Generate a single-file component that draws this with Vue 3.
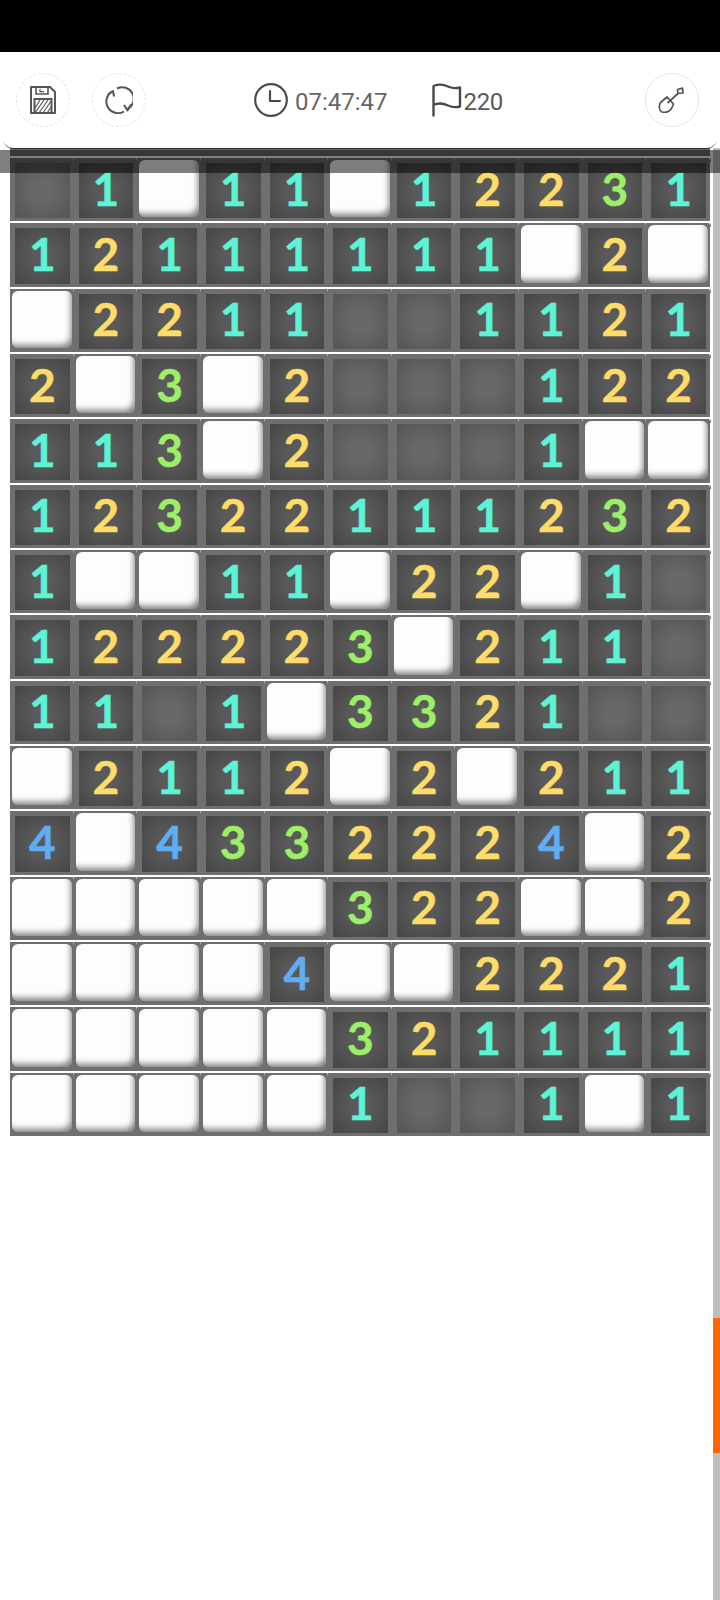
<script setup>
// W = open white tile, . = empty pit, digits = count
const rows = [
  '.1W11W12231',
  '12111111W2W',
  'W2211..1121',
  '2W3W2...122',
  '113W2...1WW',
  '12322111232',
  '1WW11W22W1.',
  '122223W211.',
  '11.1W3321..',
  'W2112W2W211',
  '4W4332224W2',
  'WWWWW322WW2',
  'WWWW4WW2221',
  'WWWWW321111',
  'WWWWW1..1W1'
]
const cells = rows.flatMap((row) => row.split(''))
</script>

<template>
  <div class="page">
    <div class="status-bar"></div>
    <header class="toolbar">
      <button class="round-btn dashed">
        <svg width="28" height="30" viewBox="0 0 28 30" fill="none" stroke="#555" stroke-width="2">
          <path d="M2 2h19l5 5v21H2z" stroke-linejoin="round" />
          <path d="M7 2v7h12V2" stroke-width="1.6" />
          <path d="M11 4v2.600h4" stroke-width="1.300" />
          <rect x="5.500" y="14" width="17" height="14" stroke-width="2" />
          <path d="M6 23l5-8M6 28l9-13M10 28l9-13M14 28l8-12M18 28l4-6" stroke-width="1.200" />
        </svg>
      </button>
      <button class="round-btn dashed second">
        <svg width="28" height="28" viewBox="0 0 28 28" fill="none" stroke="#555" stroke-width="2">
          <path d="M12 2.500A11.500 11.500 0 0 1 22.500 23" />
          <path d="M19 25.500A11.500 11.500 0 0 1 7 5.500" />
          <path d="M19 19 22.500 24.500 26 18.500" stroke-linejoin="round" />
          <path d="M3 8.500 8 5 9 10.500" stroke-linejoin="round" />
        </svg>
      </button>
      <div class="stats">
        <div class="stat">
          <svg width="36" height="36" viewBox="0 0 36 36" fill="none" stroke="#4a4a4a" stroke-width="2.200">
            <circle cx="18" cy="18" r="15.800" />
            <path d="M17 9v10h10" stroke-linecap="round" stroke-linejoin="round" />
          </svg>
          <span class="clock-text">07:47:47</span>
        </div>
        <div class="stat flags">
          <svg width="32" height="34" viewBox="0 0 32 34" fill="none" stroke="#4a4a4a" stroke-width="2.400">
            <path d="M2.500 32.500V3C9 .5 13 1.500 17 3.500c4 1.800 7.500 2.300 12 1V23.500c-4.500 1.200-8 .8-12-1-5-2.400-9.500-3-14.500-.5" stroke-linecap="round" stroke-linejoin="round" />
          </svg>
          <span class="flag-text">220</span>
        </div>
      </div>
      <button class="round-btn solid">
        <svg width="28" height="28" viewBox="0 0 28 28" fill="none" stroke="#555" stroke-width="1.700" stroke-linejoin="round">
          <path d="M9 11 2.500 16.500C.5 20 1 24.500 4 26c4 .8 7.500-.5 9.500-3.500L15.500 18z" />
          <path d="M9.500 17 20 7.500" />
          <path d="M20 7.500 19.500 3.500 24.500 2 25 7z" />
        </svg>
      </button>
    </header>

    <main class="board">
      <div class="board-edge"></div>
      <div v-for="(cell, i) in cells" :key="i" class="cell">
        <div v-if="cell === 'W'" class="tile"></div>
        <div v-else class="pit" :class="'n' + (cell === '.' ? '0' : cell)">{{ cell === '.' ? '' : cell }}</div>
      </div>
    </main>

    <div class="band"></div>
    <div class="scroll-track"><div class="scroll-thumb"></div></div>
  </div>
</template>

<style>
html,
body {
  margin: 0;
  background: #fff;
}
</style>

<style scoped>
.page {
  position: relative;
  width: 720px;
  height: 1600px;
  overflow: hidden;
  background: #fff;
  font-family: Roboto, sans-serif;
}
.status-bar {
  height: 52px;
  background: #000;
}
.toolbar {
  position: relative;
  z-index: 3;
  display: flex;
  align-items: center;
  box-sizing: border-box;
  height: 96px;
  margin: 0 2px;
  padding: 0 19px 0 14px;
  background: #fff;
  border-radius: 0 0 12px 12px;
  box-shadow: 0 2px 1px -1px rgba(0, 0, 0, 0.7);
}
.round-btn {
  display: flex;
  align-items: center;
  justify-content: center;
  box-sizing: border-box;
  width: 54px;
  height: 54px;
  padding: 0;
  background: #fff;
  border-radius: 50%;
  flex-shrink: 0;
}
.dashed {
  border: 1px dashed #e2e2e2;
}
.second {
  margin-left: 22px;
}
.solid {
  border: 1px solid #e6e6e6;
  margin-left: auto;
}
.stats {
  display: flex;
  align-items: center;
  margin-left: 107px;
  gap: 43px;
  color: #666;
  font-size: 24px;
}
.stat {
  display: flex;
  align-items: center;
  gap: 6px;
}
.flags {
  gap: 1px;
  color: #5a5a5a;
}
.clock-text,
.flag-text {
  position: relative;
  top: 2px;
}
.flag-text {
  letter-spacing: -0.4px;
}
.board {
  display: grid;
  grid-template-columns: repeat(11, 63.636px);
  grid-template-rows: 8px repeat(15, 63.33px);
  row-gap: 2px;
  width: 700px;
  margin-left: 10px;
}
.board-edge {
  grid-column: 1 / -1;
  background: #6f6f6f;
}
.cell {
  position: relative;
  box-sizing: border-box;
  background: #6f6f6f;
}
.cell::after {
  content: '';
  position: absolute;
  right: -1px;
  top: -2px;
  width: 2px;
  height: 6px;
  background: linear-gradient(#fff 30%, #8d8d8d 60%, #6f6f6f);
}
.tile {
  position: absolute;
  top: 2px;
  right: 2px;
  bottom: 4px;
  left: 2px;
  background: #fdfdfd;
  border-radius: 6px;
  box-shadow: inset -4px -6px 6px -3px rgba(0, 0, 0, 0.5);
}
.pit {
  position: absolute;
  top: 5px;
  right: 4px;
  bottom: 3px;
  left: 5px;
  display: flex;
  align-items: center;
  justify-content: center;
  box-sizing: border-box;
  padding-bottom: 4px;
  background: radial-gradient(circle, #5a5a5a 25%, #474747 95%);
  font-family: Lato, sans-serif;
  font-size: 46px;
  font-weight: 700;
  line-height: 1;
  -webkit-text-stroke: 0.5px currentColor;
}
.n0 {
  background: radial-gradient(circle, #686868 25%, #565656 95%);
}
.n1 {
  color: #5cf3d6;
}
.n2 {
  color: #fedc6a;
}
.n3 {
  color: #9cef66;
}
.n4 {
  color: #5fadf2;
}
.band {
  position: absolute;
  z-index: 2;
  top: 150px;
  left: 0;
  width: 720px;
  height: 23px;
  background: rgba(0, 0, 0, 0.5);
}
.scroll-track {
  position: absolute;
  z-index: 1;
  top: 148px;
  right: 0;
  bottom: 0;
  width: 7px;
  background: #bdbdbd;
}
.scroll-thumb {
  position: absolute;
  top: 1170px;
  left: 0;
  width: 7px;
  height: 135px;
  background: #ff6600;
}
</style>
